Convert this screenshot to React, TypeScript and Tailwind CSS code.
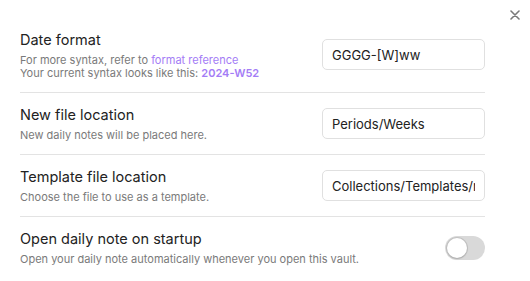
import React from 'react';

type Row = {
  title: string;
  desc: React.ReactNode;
  value?: string;
};

const rows: Row[] = [
  {
    title: 'Date format',
    desc: (
      <>
        For more syntax, refer to <span className="text-[#a47cf6]">format reference</span>
        <br />
        Your current syntax looks like this:{' '}
        <span className="font-semibold text-[#a47cf6]">2024-W52</span>
      </>
    ),
    value: 'GGGG-[W]ww',
  },
  {
    title: 'New file location',
    desc: 'New daily notes will be placed here.',
    value: 'Periods/Weeks',
  },
  {
    title: 'Template file location',
    desc: 'Choose the file to use as a template.',
    value: 'Collections/Templates/note-weekly',
  },
];

function Toggle() {
  return (
    <div className="flex h-6 w-10 shrink-0 items-center rounded-full bg-[#d9d9d9] px-[2px]">
      <div className="h-5 w-5 rounded-full bg-white shadow-[0_0_0_1px_rgba(0,0,0,0.1),0_1px_2px_rgba(0,0,0,0.12)]" />
    </div>
  );
}

function Info({ title, desc }: { title: string; desc: React.ReactNode }) {
  return (
    <div className="min-w-0">
      <div className="text-[14.5px] leading-5">{title}</div>
      <div className="mt-1 text-[11px] leading-[13px] text-[#7a7a7a]">{desc}</div>
    </div>
  );
}

export default function App() {
  return (
    <div
      className="relative h-[281px] w-[530px] bg-white pl-5 pr-[45px] pt-[17px] text-[#222]"
      style={{ fontFamily: 'Inter, "Noto Sans", sans-serif' }}
    >
      {/* close button */}
      <svg
        className="absolute right-[10px] top-[10px]"
        width="10"
        height="10"
        viewBox="0 0 10 10"
        fill="none"
        stroke="#7a7a7a"
        strokeWidth="1.6"
        strokeLinecap="round"
      >
        <path d="M1 1 L9 9 M9 1 L1 9" />
      </svg>

      {rows.map((row, i) => (
        <div
          key={row.title}
          className={
            'flex items-center justify-between ' +
            (i > 0 ? 'h-[62px] border-t border-[#e3e3e3]' : 'h-[75px]')
          }
        >
          <Info title={row.title} desc={row.desc} />
          <input
            readOnly
            value={row.value}
            className="h-[31px] w-[163px] shrink-0 rounded-[5px] border border-[#e0e0e0] bg-white px-[9px] text-[13px] text-[#222] outline-none"
            style={{ fontFamily: 'Inter, "Noto Sans", sans-serif' }}
          />
        </div>
      ))}

      <div className="flex h-[62px] items-center justify-between border-t border-[#e3e3e3]">
        <Info
          title="Open daily note on startup"
          desc="Open your daily note automatically whenever you open this vault."
        />
        <Toggle />
      </div>
    </div>
  );
}
